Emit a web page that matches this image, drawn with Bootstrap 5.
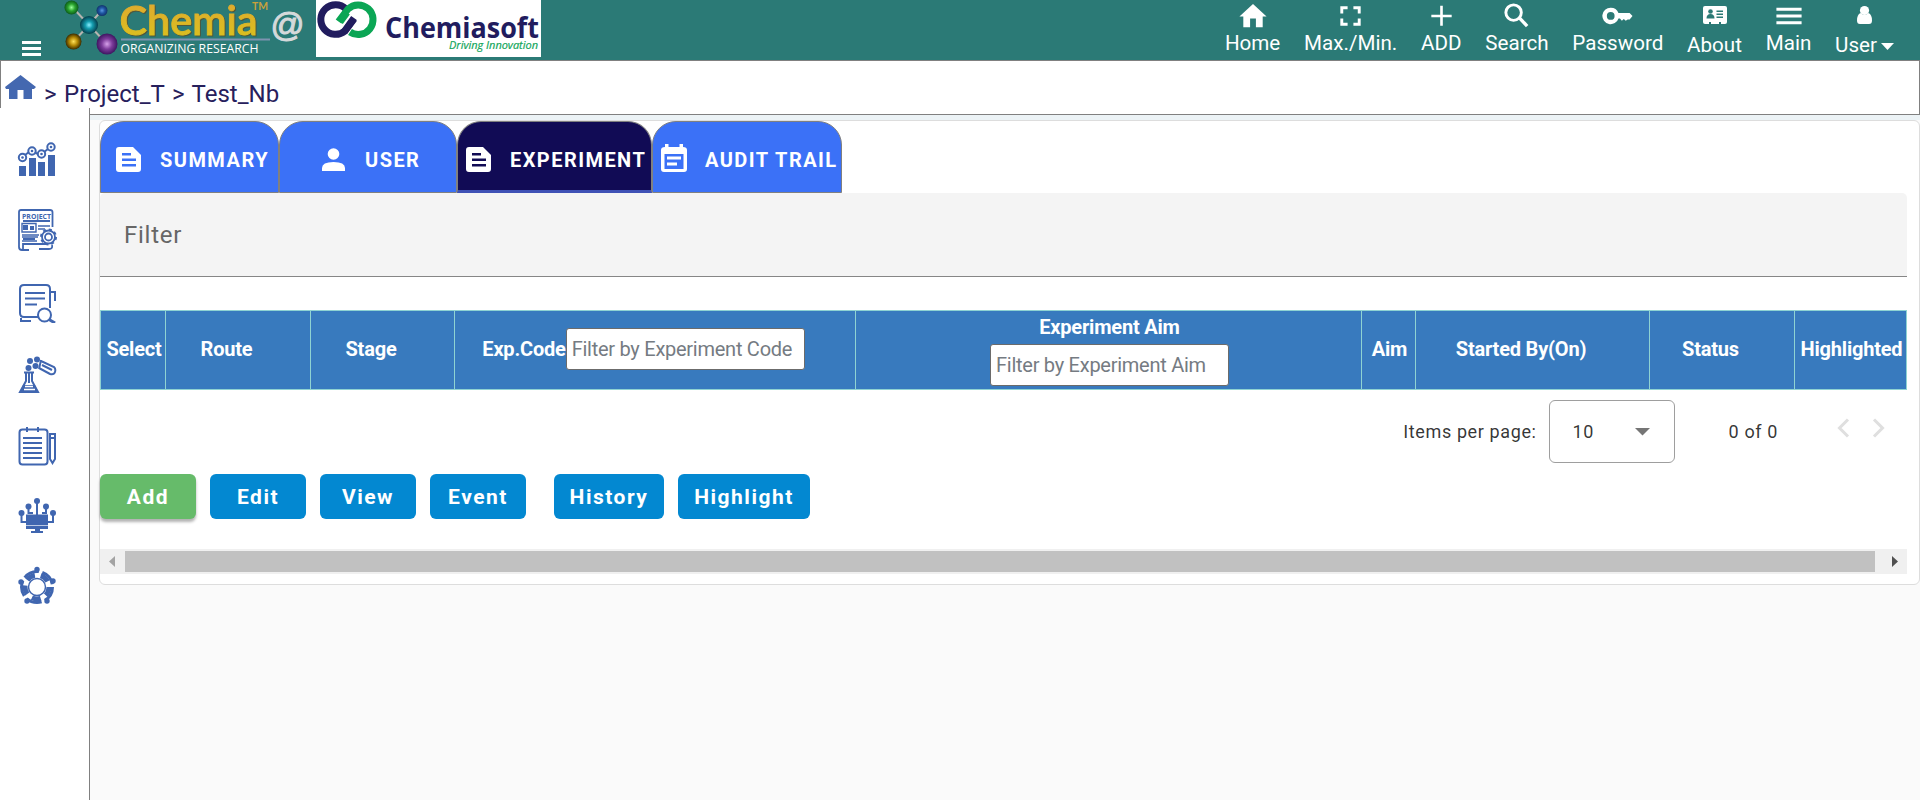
<!DOCTYPE html>
<html lang="en">
<head>
<meta charset="utf-8">
<title>Chemia – Experiment</title>
<link href="https://cdn.jsdelivr.net/npm/bootstrap@5.3.0/dist/css/bootstrap.min.css" rel="stylesheet">
<style>
body{font-family:Roboto,"Liberation Sans",sans-serif;background:#fafafa;height:800px;overflow:hidden;color:#212529;line-height:1.2}
svg{display:block}
.topbar{height:60px;background:#2b7a76}
.brand-menu{width:86px;padding:41px 0 0 22px}
.toplinks{gap:23.8px;padding-right:26px}
.toplinks a{color:#fff;text-decoration:none;font-size:20.6px;line-height:24px;text-align:center}
.toplinks svg{height:31px;margin:0 auto}
.toplinks .low svg{height:33px}
.crumbs{height:55px;border:1px solid #808080;border-left:0;background:#fff;color:#27205c;font-size:24px;word-spacing:1.6px}
.crumb-main{padding:14px 0 0 4px}
.side{width:90px;background:#fff;border-right:1px solid #808080;margin-top:-7px;padding-top:31px;z-index:1}
.side svg{width:40px;height:40px;margin-left:17px}
.edge{width:1px;height:48px;background:#808080}
.content-col{background:#fafafa}
.band{height:5px;background:#ecf3f6}
.panel{margin-left:9px;border:1px solid #ddd;border-radius:6px;height:465px;background:#fff;padding-right:12px}
.tabs-row{height:72px}
.tab-item{border:1px solid #808080;border-radius:24px 24px 0 0;background:#3b71f7;color:#fff;font-size:20px;font-weight:700;letter-spacing:1.45px;height:72px;white-space:nowrap}
.tab-item.current{background:#110b55;border-bottom:3px solid #3f51b5}
.tab-item svg{margin-top:5px}
.tab-item span{margin:5px 0 0 19px}
.tab-item.current svg,.tab-item.current span{margin-top:7px}
.filter-box{height:84px;background:#f4f4f4;border-bottom:1px solid #868686;border-radius:5px 5px 0 0;color:#666;font-size:24px;letter-spacing:.75px;padding:28px 0 0 24px}
.exp-table{margin-top:33px;height:80px;display:grid;grid-template-columns:65px 145px 144px 401px 506px 54px 234px 145px 112px;border:1px solid #8fd3d2;border-right:0;background:#387abe;color:#fff;font-size:20px;font-weight:700;letter-spacing:-.2px;width:1807px}
.exp-table>div{border-right:1px solid #8fd3d2;display:flex;align-items:center;justify-content:center;white-space:nowrap;padding:0 0 2px 2px}
.exp-table>.shift{padding-right:25px}
.exp-table input{width:239px;height:42px;border:1px solid #6b6b6b;border-radius:3px;padding:0 5px;font-size:20px;font-weight:400;letter-spacing:-.26px;background:#fff}
.exp-table input::placeholder{color:#757b82}
.pager{height:84px;font-size:18px;color:rgba(0,0,0,.8);letter-spacing:.62px;padding-top:10px}
.size-box{width:126px;height:63px;border:1px solid #9e9e9e;border-radius:6px;margin-left:12px;padding:0 24px 0 23px}
.act{height:45px;width:96px;border:0;border-radius:6px;background:#0388d1;color:#fff;font-size:21px;font-weight:700;letter-spacing:1.5px;line-height:25px;padding:1px 0 0}
.act.add{background:#66bb6a;box-shadow:0 3px 3px rgba(0,0,0,.3)}
.hbar{margin-top:30px;height:25px;background:#f0f0f0}
.hbar .grip{height:21px;background:#c1c1c1}
.wordmark{filter:drop-shadow(1px 1px 0 #50563a)}
</style>
</head>
<body>
<svg width="0" height="0" class="position-absolute">
<defs>
<radialGradient id="gg"><stop offset="0" stop-color="#9f9"/><stop offset=".5" stop-color="#2ba52f"/><stop offset="1" stop-color="#0b5a1a"/></radialGradient>
<radialGradient id="gb"><stop offset="0" stop-color="#5b9ae0"/><stop offset=".5" stop-color="#1f57a4"/><stop offset="1" stop-color="#12336b"/></radialGradient>
<radialGradient id="gc"><stop offset="0" stop-color="#8ef"/><stop offset=".4" stop-color="#159eb0"/><stop offset="1" stop-color="#043c4a"/></radialGradient>
<radialGradient id="gy"><stop offset="0" stop-color="#ffe25a"/><stop offset=".5" stop-color="#b58a06"/><stop offset="1" stop-color="#3b2c00"/></radialGradient>
<radialGradient id="gp"><stop offset="0" stop-color="#d6a0ea"/><stop offset=".5" stop-color="#7d3c9b"/><stop offset="1" stop-color="#3d1560"/></radialGradient>
<linearGradient id="gold" x1="0" y1="0" x2="0" y2="1"><stop offset="0" stop-color="#e0a532"/><stop offset="1" stop-color="#d9c31c"/></linearGradient>
<symbol id="doc" viewBox="0 0 25 25"><path fill="currentColor" fill-rule="evenodd" d="M3 0H17L25 8V22Q25 25 22 25H3Q0 25 0 22V3Q0 0 3 0ZM6 6V8.500H15V6ZM6 11.500V14H20V11.500ZM6 17V19.500H20V17Z"/></symbol>
</defs>
</svg>

<header class="topbar d-flex">
  <div class="brand-menu"><svg width="19" height="15"><path d="M0 1.500H19M0 7.500H19M0 13.500H19" stroke="#fff" stroke-width="3"/></svg></div>
  <svg width="480" height="60" viewBox="64 0 480 60" style="margin-left:-22px;overflow:visible">
    <path d="M72 7L89 25L102 10M89 25L73 42M89 25L107 44" stroke="#b7b4b0" stroke-width="2" fill="none"/>
    <circle cx="71.500" cy="7.500" r="7" fill="url(#gg)"/><circle cx="102" cy="10.500" r="5.500" fill="url(#gb)"/><circle cx="89" cy="25" r="9" fill="url(#gc)"/><circle cx="73.500" cy="41.500" r="8" fill="url(#gy)"/><circle cx="107" cy="44" r="10.500" fill="url(#gp)"/>
    <g font-family="Lato,sans-serif" class="wordmark">
    <text x="119.500" y="34.500" font-size="41" font-weight="600" fill="url(#gold)" stroke="url(#gold)" stroke-width=".9" textLength="138" lengthAdjust="spacingAndGlyphs">Chemia</text></g>
    <text x="252" y="10" font-family="Lato,sans-serif" font-size="11" font-weight="700" fill="#c9a13b" textLength="16" lengthAdjust="spacingAndGlyphs">TM</text>
    <path d="M121 39.500H270" stroke="#7d93b0" stroke-width="2"/>
    <text x="120.500" y="53" font-family="Open Sans,sans-serif" font-size="12.500" fill="#fff" textLength="138" lengthAdjust="spacingAndGlyphs">ORGANIZING RESEARCH</text>
    <text x="270.500" y="36" font-family="Liberation Sans,sans-serif" font-size="33.500" fill="#d5d9da" stroke="#d5d9da" stroke-width="1" textLength="34" lengthAdjust="spacingAndGlyphs">@</text>
    <rect x="316" width="225" height="57" fill="#fff"/>
    <g fill="none" stroke-width="7"><path d="M346 9A14.800 14.800 0 1 0 345 31L354 19" stroke="#211c5e"/><path d="M338.500 21.500L348 9A14.800 14.800 0 1 1 350 32" stroke="#0ba655"/><path d="M344 32L354 18" stroke="#211c5e"/><path d="M340 22L347 12.500" stroke="#0ba655"/></g>
    <text x="385" y="38" font-family="Open Sans,sans-serif" font-weight="700" font-size="29" fill="#211c5e" textLength="154" lengthAdjust="spacingAndGlyphs">Chemiasoft</text>
    <text x="449" y="49" font-family="Open Sans,sans-serif" font-style="italic" font-size="10.500" fill="#12a65a" stroke="#12a65a" stroke-width=".2" textLength="89" lengthAdjust="spacingAndGlyphs">Driving Innovation</text>
  </svg>
  <nav class="toplinks d-flex ms-auto">
    <a href="#"><svg width="28" viewBox="0 0 28 32"><path fill="#fff" d="M14 4L28 17H24V28H17V19H11V28H4V17H0Z"/></svg>Home</a>
    <a href="#"><svg width="21" viewBox="0 0 21 32"><path fill="none" stroke="#fff" stroke-width="3" d="M1.500 14V8H7.500M13.500 8H19.500V14M19.500 19V25H13.500M7.500 25H1.500V19"/></svg>Max./Min.</a>
    <a href="#"><svg width="21" viewBox="0 0 21 32"><path stroke="#fff" stroke-width="2.700" d="M10.500 6V26.500M0 16.500H21"/></svg>ADD</a>
    <a href="#"><svg width="25" viewBox="0 0 25 32"><circle cx="9.500" cy="13" r="8" fill="none" stroke="#fff" stroke-width="3"/><path stroke="#fff" stroke-width="3.500" d="M15 18L23.500 27"/></svg>Search</a>
    <a href="#"><svg width="31" viewBox="0 0 31 32"><path fill="#fff" fill-rule="evenodd" d="M8.500 8A8.500 8.500 0 1 0 16.500 19H18L20 21.500L22 19.500L24 21.500L26 20H28L31 16.500L28 13.500H16.500A8.500 8.500 0 0 0 8.500 8ZM8.500 12.500A4 4 0 1 1 8.500 20.500A4 4 0 1 1 8.500 12.500Z"/></svg>Password</a>
    <a href="#" class="low"><svg width="24" viewBox="0 0 24 33"><rect y="6" width="24" height="18" rx="2" fill="#fff"/><g fill="#2b7a76"><circle cx="7.500" cy="11.500" r="2.300"/><path d="M3.500 18.500Q3.500 14 7.500 14Q11.500 14 11.500 18.500ZM13.500 10.500H20V12H13.500ZM13.500 13.500H20V15H13.500ZM13.500 16.500H20V18H13.500ZM6 22H8V24H6ZM16 22H18V24H16Z"/></g></svg>About</a>
    <a href="#"><svg width="26" viewBox="0 0 26 32"><path stroke="#fff" stroke-width="3" d="M0 9.500H26M0 16.500H26M0 23.500H26"/></svg>Main</a>
    <a href="#" class="low"><svg width="15" viewBox="0 0 15 33"><circle cx="7.500" cy="10.500" r="4.600" fill="#fff"/><path fill="#fff" d="M3.500 13Q7.500 17 11.500 13Q15 14.500 15 20.500Q15 24 12 24H3Q0 24 0 20.500Q0 14.500 3.500 13Z"/></svg>User<svg width="13" height="7" viewBox="0 0 13 7" class="d-inline-block align-middle" style="height:7px;margin-left:4px"><path fill="#fff" d="M0 0H13L6.500 7Z"/></svg></a>
  </nav>
</header>

<div class="crumbs d-flex">
  <div class="edge"></div>
  <div class="crumb-main d-flex"><svg width="31" height="24" viewBox="0 0 31 24"><path fill="#4468b0" d="M15.500 0L31 12L29 14H27V24H18.500V15H12.500V24H4V14H1L0 12Z"/></svg><span style="margin:5px 0 0 8px">&gt; Project_T &gt; Test_Nb</span></div>
</div>

<div class="d-flex" style="height:685px">
  <aside class="side d-flex flex-column position-relative" style="height:692px">
    <svg viewBox="0 0 40 40" style="margin-top:1px"><g fill="#4066b0"><path d="M2 26H9V36H2ZM12 18H19V36H12ZM21 22H28V36H21ZM31 15H38V36H31Z"/></g><g fill="none" stroke="#4066b0" stroke-width="2"><path d="M8 15L12 12M18 12L20 14M27 12L31 9"/><circle cx="5.500" cy="17.500" r="3.700"/><circle cx="15" cy="11" r="3.700"/><circle cx="24.500" cy="14" r="3.700"/><circle cx="34" cy="7" r="3.700"/></g><g fill="#4066b0"><circle cx="5.500" cy="17.500" r="1.300"/><circle cx="15" cy="11" r="1.300"/><circle cx="24.500" cy="14" r="1.300"/><circle cx="34" cy="7" r="1.300"/></g></svg>
    <svg viewBox="0 0 40 44" style="height:44px;margin-top:28px"><g fill="none" stroke="#4066b0" stroke-width="1.800"><path d="M35.500 19V4Q35.500 2 33 2H4Q2 2 2 4V39Q2 42 5 42H12M2 24V39M6 42V36H30M22 41H32Q36 41 35 37M6 13H33M6 31H18"/><path d="M5 15.500H19V24H5ZM21 18H33M21 21H28M5 27H22M5 29H21M5 33H20" stroke-width="1.400"/><circle cx="31.500" cy="29" r="3.500"/><circle cx="31.500" cy="29" r="6.500"/><circle cx="31.500" cy="29" r="7.500" stroke-width="2" stroke-dasharray="3 2.900"/></g><path fill="#4066b0" d="M6 17H11V22H6ZM13 18H17V22H13Z"/><text x="5" y="10.500" font-family="Open Sans" font-size="7" font-weight="700" fill="#4066b0" textLength="29" lengthAdjust="spacingAndGlyphs">PROJECT</text></svg>
    <svg viewBox="0 0 40 40" style="margin-top:31px"><g fill="none" stroke="#4066b0" stroke-width="2"><path d="M21 34H7Q3 34 3 30V6Q3 2 7 2H29Q33 2 33 6V25M34 9H38V18M4 35V38H14M8 10H28M8 15.500H28M8 21.500H20"/><circle cx="27.500" cy="32" r="6.500"/></g><path d="M32 36.500L38 40" stroke="#4066b0" stroke-width="3"/></svg>
    <svg viewBox="0 0 40 40" style="margin-top:31px"><g fill="#4066b0"><circle cx="13" cy="7" r="3"/><circle cx="20" cy="5.500" r="3"/><circle cx="11.500" cy="14" r="3"/><circle cx="18.500" cy="12" r="3"/><path d="M6 31H18L21 38H3Z"/></g><g fill="none" stroke="#4066b0" stroke-width="2"><path d="M7 18.500H17M9 18V27L3 38H21L15 27V18M12 19V29M24 6L22 15M24 7L37 13Q39 15 38 18Q37 21 33 20L22 14M25 11L35 16" /></g><path d="M8 32.500H16M7 35.500H18" stroke="#fff" stroke-width="1.300"/></svg>
    <svg viewBox="0 0 40 40" style="margin-top:32px"><g fill="none" stroke="#4066b0" stroke-width="2"><rect x="2.500" y="3.500" width="28" height="35" rx="3"/><path d="M10 1V6M21 1V6M33 8H38V33L35.500 37L33 33ZM33 12H38"/><path d="M6 12H25M6 17H25M6 22H25M6 27H25M6 32H25" stroke-width="1.800"/></g></svg>
    <svg viewBox="0 0 40 40" style="margin-top:31px"><g fill="#4066b0"><circle cx="20" cy="4" r="3"/><circle cx="11.500" cy="9.500" r="3"/><circle cx="29" cy="9.500" r="3"/><circle cx="4.500" cy="16" r="3"/><circle cx="36" cy="16" r="3"/><path d="M9 17.500H31V32H9ZM18 32H23V34H26V36H14V34H18Z"/></g><path d="M20 4V18M11.500 9V16H16M29 9V16H25M4.500 16V25H9M36 16V25H31" fill="none" stroke="#4066b0" stroke-width="2"/><path d="M9 28.500H31" stroke="#bbc9e4"/></svg>
    <svg viewBox="0 0 40 40" style="margin-top:29px"><g fill="none" stroke="#4066b0"><circle cx="20" cy="21" r="8.500" stroke-width="1.500"/><circle cx="20" cy="21" r="12" stroke-width="5" stroke-dasharray="9 6"/><circle cx="20" cy="21" r="15.500" stroke-width="3" stroke-dasharray="16 3.500"/></g><g fill="#4066b0"><circle cx="20" cy="3.500" r="2.700"/><circle cx="4" cy="16" r="2.700"/><circle cx="36" cy="15" r="2.700"/><circle cx="10" cy="35" r="2.700"/><circle cx="30" cy="35" r="2.700"/></g></svg>
  </aside>

  <main class="content-col flex-grow-1">
    <div class="band"></div>
    <section class="panel">
      <div class="tabs-row d-flex">
        <div class="tab-item d-flex align-items-center" style="width:179px;padding-left:15px"><svg width="25" height="25"><use href="#doc"/></svg><span>SUMMARY</span></div>
        <div class="tab-item d-flex align-items-center" style="width:178px;padding-left:42px"><svg width="23" height="23" viewBox="0 0 23 23"><circle cx="11.500" cy="6" r="5.800" fill="#fff"/><path fill="#fff" d="M0 23V20Q0 14 11.500 14Q23 14 23 20V23Z"/></svg><span style="margin-left:20px">USER</span></div>
        <div class="tab-item current d-flex align-items-center" style="width:195px;padding-left:8px"><svg width="25" height="25"><use href="#doc"/></svg><span>EXPERIMENT</span></div>
        <div class="tab-item d-flex align-items-center" style="width:190px;padding-left:8px"><svg width="26" height="28" viewBox="0 0 26 28" style="margin-top:2px"><path fill="#fff" fill-rule="evenodd" d="M4 0H7.500V3H18.500V0H22V3Q26 3 26 6V25Q26 28 23 28H3Q0 28 0 25V6Q0 3 4 3ZM3.500 10V25H22.500V10Z"/><path d="M6 14H20M6 20H16" stroke="#fff" stroke-width="2.800"/></svg><span style="margin-left:18px">AUDIT TRAIL</span></div>
      </div>
      <div class="filter-box">Filter</div>
      <div class="exp-table">
        <div>Select</div><div class="shift">Route</div><div class="shift">Stage</div>
        <div class="shift">Exp.Code<input placeholder="Filter by Experiment Code"></div>
        <div class="flex-column" style="padding-bottom:0">Experiment Aim<input placeholder="Filter by Experiment Aim" style="margin-top:5px"></div>
        <div>Aim</div><div class="shift">Started By(On)</div><div class="shift">Status</div><div>Highlighted</div>
      </div>
      <div class="pager d-flex justify-content-end">
        <div class="d-flex align-items-center" style="height:63px">Items per page:
          <div class="size-box d-flex align-items-center justify-content-between">10<svg width="15" height="8"><path fill="#757575" d="M0 0H15L7.500 7.500Z"/></svg></div>
          <span style="margin-left:54px">0 of 0</span>
          <svg width="48" height="20" viewBox="0 0 48 20" style="margin:-8px 22px 0 59px"><path d="M11 1.500L2.500 10L11 18.500M37 1.500L45.500 10L37 18.500" fill="none" stroke="#dfdfdf" stroke-width="3"/></svg>
        </div>
      </div>
      <div class="d-flex" style="gap:14px">
        <button class="btn act add">Add</button><button class="btn act">Edit</button><button class="btn act">View</button><button class="btn act">Event</button>
        <button class="btn act" style="width:110px;margin-left:14px">History</button><button class="btn act" style="width:132px">Highlight</button>
      </div>
      <div class="hbar d-flex align-items-center">
        <svg width="25" height="25"><path fill="#a3a3a3" d="M15 7V18L9 12.500Z"/></svg>
        <div class="grip flex-grow-1"></div>
        <svg width="32" height="25"><path fill="#505050" d="M17 7V18L23 12.500Z"/></svg>
      </div>
    </section>
  </main>
</div>
<script src="https://cdn.jsdelivr.net/npm/bootstrap@5.3.0/dist/js/bootstrap.bundle.min.js"></script>
</body>
</html>
